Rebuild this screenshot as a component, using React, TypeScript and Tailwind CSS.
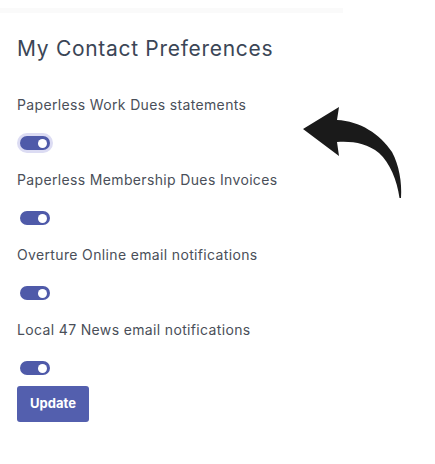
import React from "react";

const prefs = [
  "Paperless Work Dues statements",
  "Paperless Membership Dues Invoices",
  "Overture Online email notifications",
  "Local 47 News email notifications",
];

function Toggle({ focused }: { focused?: boolean }) {
  return (
    <div
      className={`flex h-[14px] w-[30px] items-center justify-end rounded-full bg-[#4f5aa9] pr-[3px] ${
        focused ? "ring-[3px] ring-[#dcdcf3]" : ""
      }`}
    >
      <div className="h-[9px] w-[9px] rounded-full bg-white" />
    </div>
  );
}

function CurvedArrow() {
  return (
    <svg
      className="absolute left-[300px] top-[104px]"
      width="106"
      height="98"
      viewBox="300 104 106 98"
    >
      <path
        d="M303 129 L339 107 L337 120 C360 121 380 134 392 152 C399 165 402 182 401 198 L399.5 198 C397 180 390 163 379 153 C367 143 352 141 337 142 L339 156 Z"
        fill="#1a1a1a"
      />
    </svg>
  );
}

export default function App() {
  return (
    <div className="relative h-[464px] w-[435px] bg-white font-['Inter',sans-serif]">
      <div className="pt-[8px]">
        <div className="h-[5px] w-[343px] bg-[#fafafa]" />
      </div>

      <div className="px-[17px]">
        <h2 className="mt-[24px] text-[21px] leading-[24px] tracking-[0.7px] text-[#3b4656]">
          My Contact Preferences
        </h2>

        <div className="mt-[35px] flex flex-col">
          {prefs.map((label, i) => (
            <div key={label} className="flex h-[75px] flex-col">
              <p className="text-[14px] leading-[17px] tracking-[0.35px] text-[#4a4f59]">{label}</p>
              <div className="mt-[23px] pl-[3px]">
                <Toggle focused={i === 0} />
              </div>
            </div>
          ))}
        </div>

        <button className="-mt-[10px] block h-[36px] w-[72px] rounded-[3px] bg-[#535fae] text-[13px] font-bold text-white">
          Update
        </button>
      </div>

      <CurvedArrow />
    </div>
  );
}
